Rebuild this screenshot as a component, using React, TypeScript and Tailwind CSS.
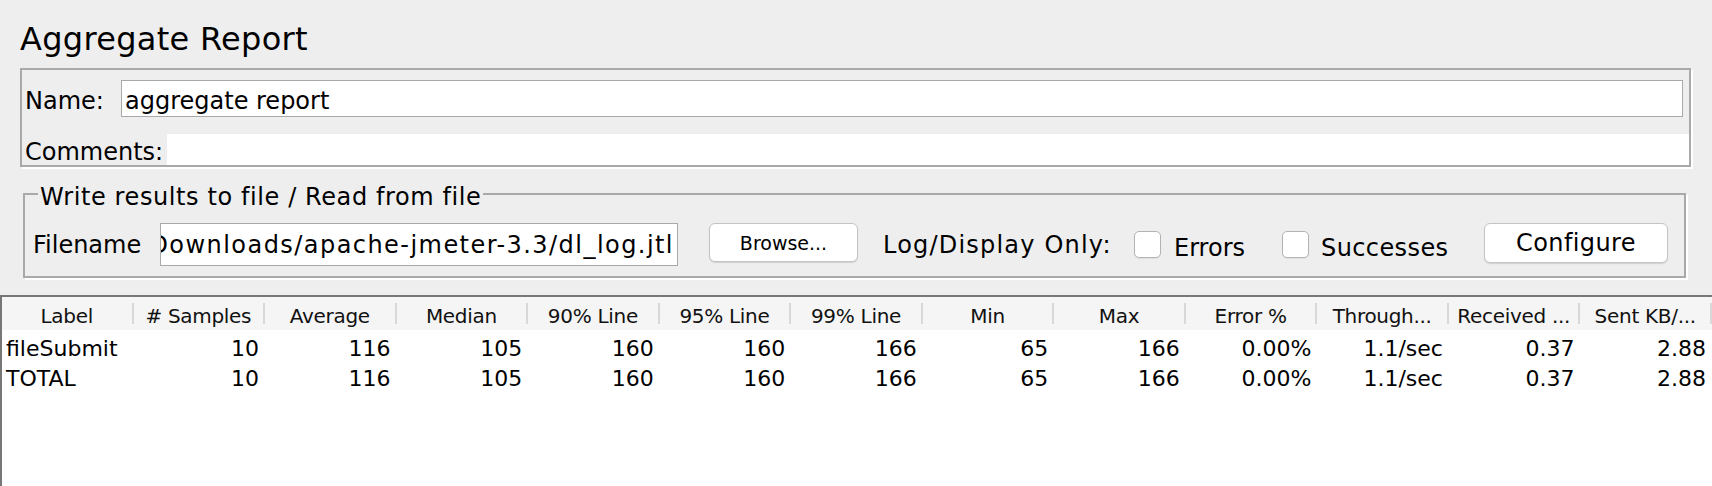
import React from 'react';

const columns = [
  'Label',
  '# Samples',
  'Average',
  'Median',
  '90% Line',
  '95% Line',
  '99% Line',
  'Min',
  'Max',
  'Error %',
  'Through...',
  'Received ...',
  'Sent KB/...',
];

const rows = [
  ['fileSubmit', '10', '116', '105', '160', '160', '166', '65', '166', '0.00%', '1.1/sec', '0.37', '2.88'],
  ['TOTAL', '10', '116', '105', '160', '160', '166', '65', '166', '0.00%', '1.1/sec', '0.37', '2.88'],
];

const Checkbox = () => (
  <span className="shrink-0 w-[27px] h-[27px] rounded-[5px] border border-[#b3b3b3] bg-white shadow-[0_1px_1px_rgba(0,0,0,0.06)]" />
);

export default function App() {
  return (
    <div className="w-[1712px] h-[486px] bg-[#eeeeee] flex flex-col font-['DejaVu_Sans',sans-serif] text-black overflow-hidden">
      <h1 className="pl-[20px] pt-[23px] text-[32px] leading-[32px] tracking-[0.3px]">Aggregate Report</h1>

      {/* name / comments */}
      <div className="mt-[13px] ml-[20px] mr-[21px] border-2 border-[#a9a9a9] shadow-[2px_2px_0_#fff] pt-[10px]">
        <div className="flex items-center h-[37px] pl-[3px] pr-[6px] text-[24px] leading-[28px]">
          <span className="shrink-0 w-[96px] pt-[4px]">Name:</span>
          <div className="flex-1 h-full bg-white border border-[#a9a9a9] pl-[3px] pt-[4px] flex items-center">
            aggregate report
          </div>
        </div>
        <div className="mt-[17px] flex items-center h-[31px] pl-[3px] text-[24px] leading-[28px]">
          <span className="shrink-0 w-[142px] pt-[4px]">Comments:</span>
          <div className="flex-1 h-full bg-white" />
        </div>
      </div>

      {/* file section */}
      <fieldset className="mt-[12px] ml-[23px] mr-[26px] border-2 border-[#a9a9a9] shadow-[2px_2px_0_#fff] pb-[10px]">
        <legend className="ml-[13px] px-[2px] pt-[6px] text-[24px] leading-[24px] tracking-[0.6px]">
          Write results to file / Read from file
        </legend>
        <div className="mt-[14px] flex items-center h-[43px] text-[24px] leading-[28px]">
          <span className="shrink-0 ml-[8px] w-[127px]">Filename</span>
          <div className="shrink-0 w-[518px] h-full bg-white border border-[#a9a9a9] flex items-center justify-end overflow-hidden pr-[3px]">
            <span className="whitespace-nowrap tracking-[1.45px]">Downloads/apache-jmeter-3.3/dl_log.jtl</span>
          </div>
          <button className="shrink-0 self-start ml-[31px] w-[149px] h-[39px] rounded-[6px] border border-[#c4c4c4] bg-white shadow-[0_1px_1px_rgba(0,0,0,0.12)] text-[19px] leading-[22px]">
            Browse...
          </button>
          <span className="shrink-0 ml-[25px] w-[251px] tracking-[1.2px]">Log/Display Only:</span>
          <Checkbox />
          <span className="shrink-0 ml-[13px] w-[108px] pt-[6px]">Errors</span>
          <Checkbox />
          <span className="shrink-0 ml-[12px] w-[163px] pt-[6px] tracking-[0.4px]">Successes</span>
          <button className="shrink-0 self-start w-[184px] h-[40px] rounded-[6px] border border-[#c4c4c4] bg-white shadow-[0_1px_1px_rgba(0,0,0,0.12)] text-[24px] leading-[28px] tracking-[0.4px]">
            Configure
          </button>
        </div>
      </fieldset>

      {/* results table */}
      <div className="mt-[17px] flex-1 flex flex-col border-t-2 border-l-2 border-[#777777] bg-white">
        <div className="h-[33px] bg-[#f5f5f5] grid grid-cols-[repeat(13,minmax(0,1fr))]">
          {columns.map((col) => (
            <div key={col} className="flex items-center min-w-0">
              <span className="flex-1 min-w-0 text-center whitespace-nowrap overflow-hidden text-[20px] leading-[24px] tracking-[-0.3px] pt-[4px] text-[#111]">
                {col}
              </span>
              <span className="shrink-0 w-[2px] h-[21px] bg-[#d8d8d8]" />
            </div>
          ))}
        </div>
        <div className="pt-[4px]">
          {rows.map((row, i) => (
            <div key={i} className="h-[30px] grid grid-cols-[repeat(13,minmax(0,1fr))] text-[22px] leading-[30px]">
              {row.map((cell, j) => (
                <div
                  key={j}
                  className={j === 0 ? 'pl-[4px] whitespace-nowrap overflow-hidden' : 'pr-[6px] text-right whitespace-nowrap overflow-hidden'}
                >
                  {cell}
                </div>
              ))}
            </div>
          ))}
        </div>
      </div>
    </div>
  );
}
